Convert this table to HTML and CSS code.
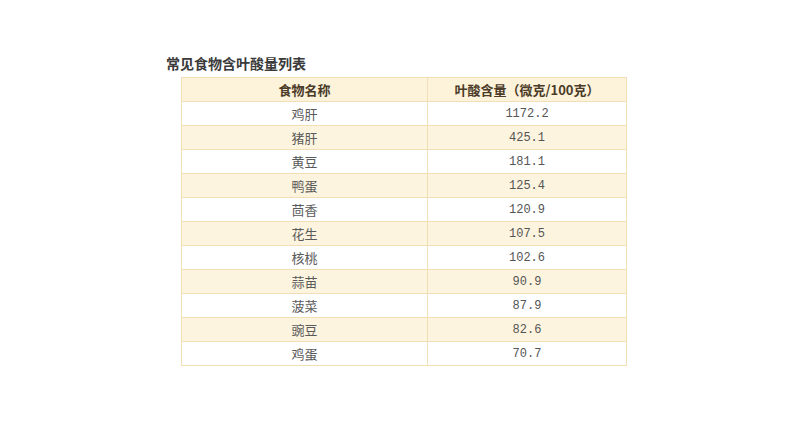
FILE: index.html
```html
<!DOCTYPE html>
<html lang="zh">
<head>
<meta charset="utf-8">
<link rel="stylesheet" href="styles.css">
</head>
<body>
<div class="page">
  <div class="title">常见食物含叶酸量列表</div>
  <table class="folate">
    <thead>
      <tr><th class="c1">食物名称</th><th class="c2">叶酸含量（微克/100克）</th></tr>
    </thead>
    <tbody>
      <tr><td>鸡肝</td><td class="num">1172.2</td></tr>
      <tr><td>猪肝</td><td class="num">425.1</td></tr>
      <tr><td>黄豆</td><td class="num">181.1</td></tr>
      <tr><td>鸭蛋</td><td class="num">125.4</td></tr>
      <tr><td>茴香</td><td class="num">120.9</td></tr>
      <tr><td>花生</td><td class="num">107.5</td></tr>
      <tr><td>核桃</td><td class="num">102.6</td></tr>
      <tr><td>蒜苗</td><td class="num">90.9</td></tr>
      <tr><td>菠菜</td><td class="num">87.9</td></tr>
      <tr><td>豌豆</td><td class="num">82.6</td></tr>
      <tr><td>鸡蛋</td><td class="num">70.7</td></tr>
    </tbody>
  </table>
</div>
</body>
</html>
```
FILE: styles.css
```css
html, body {
  margin: 0;
  padding: 0;
  background: #ffffff;
}
.page {
  padding: 55px 0 0 166px;
  font-family: "Noto Sans CJK SC", "Noto Sans", sans-serif;
}
.title {
  font-size: 14px;
  font-weight: bold;
  color: #3a3a3a;
  line-height: 17px;
  height: 17px;
}
.folate {
  margin: 5px 0 0 15px;
  border-collapse: collapse;
  width: 443px;
  table-layout: fixed;
}
.folate th, .folate td {
  border: 1px solid #f1dfb6;
  height: 23px;
  padding: 0;
  text-align: center;
  vertical-align: middle;
  font-size: 13px;
  line-height: 16px;
}
.folate th {
  background: #fdf2da;
  color: #4a3b28;
  font-weight: bold;
}
.folate .c1 { width: 245px; }
.folate .c2 { width: 198px; }
.folate td {
  color: #5a5a5a;
}
.folate tbody tr:nth-child(even) td {
  background: #fdf4df;
}
.folate td.num {
  font-family: "Liberation Mono", "DejaVu Sans Mono", monospace;
  font-size: 12px;
  color: #555555;
}
```
